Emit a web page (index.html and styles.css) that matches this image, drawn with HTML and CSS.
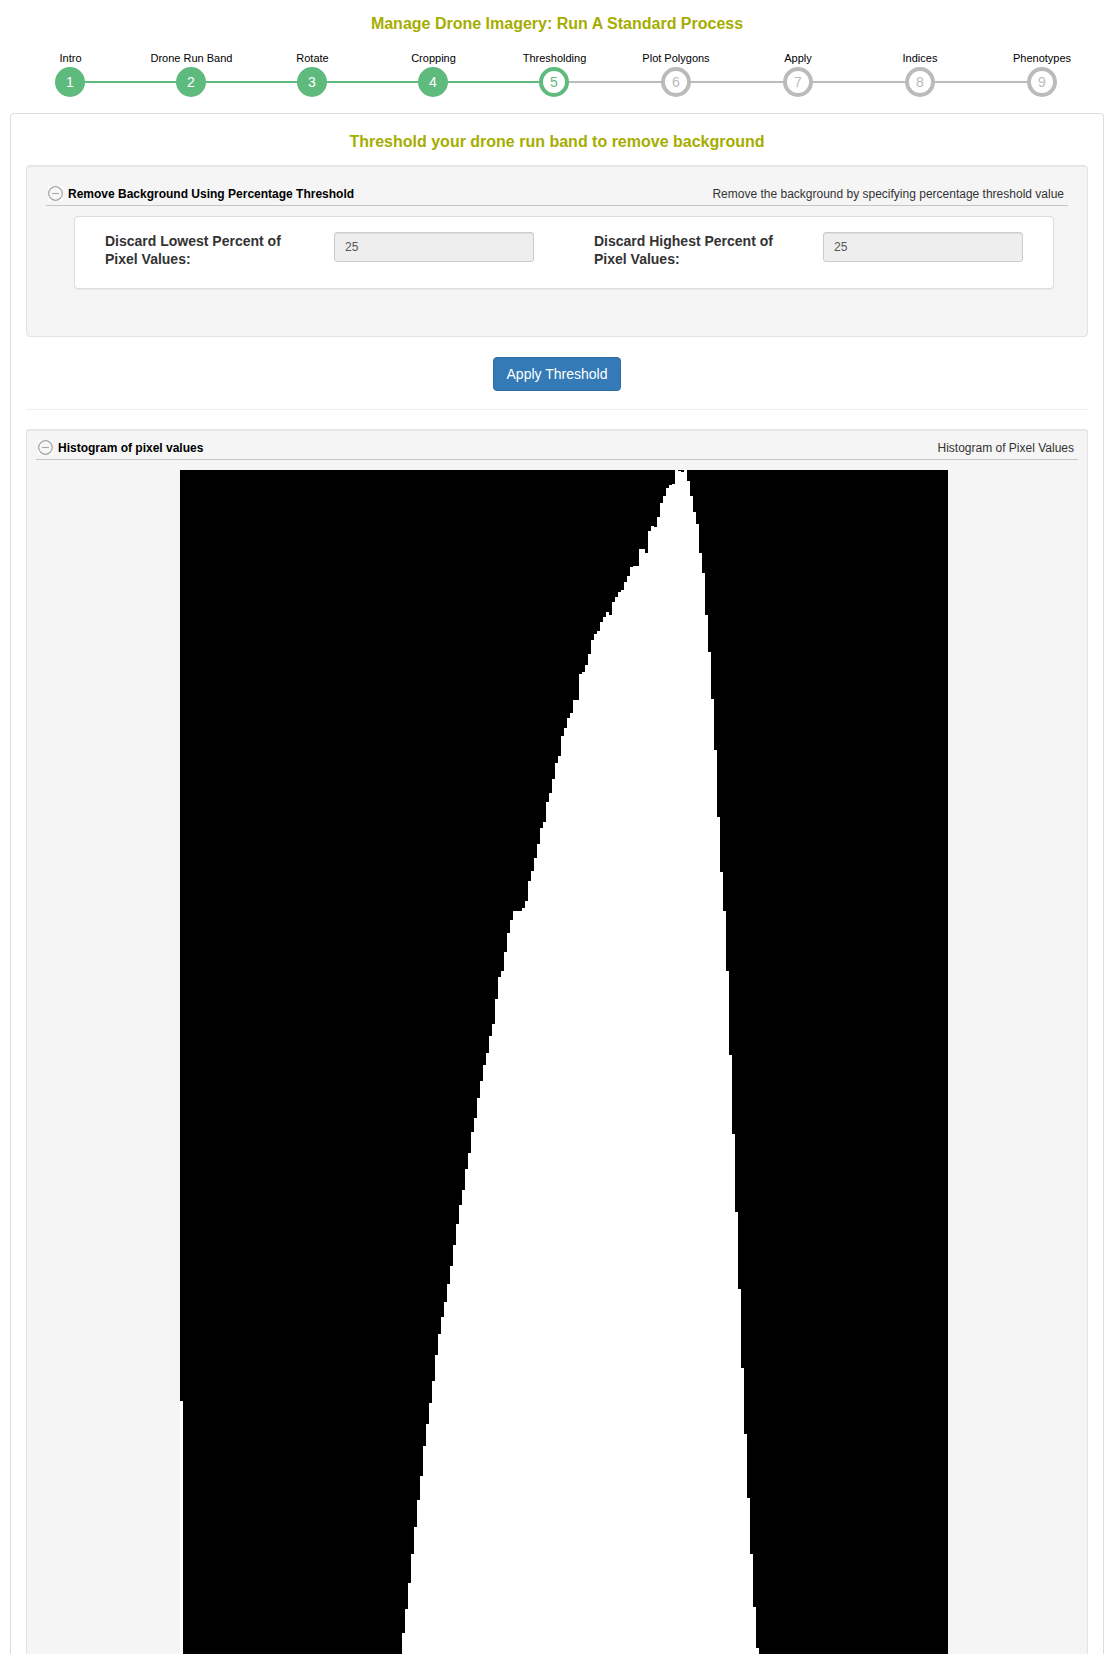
FILE: index.html
```html
<!DOCTYPE html>
<html lang="en">
<head>
<meta charset="utf-8">
<title>Manage Drone Imagery</title>
<link rel="stylesheet" href="styles.css">
</head>
<body>
<main class="page">
  <h1 class="title">Manage Drone Imagery: Run A Standard Process</h1>
  <ol class="steps">
    <li class="step done"><span class="step-name">Intro</span><span class="step-dot">1</span></li>
    <li class="step done"><span class="step-name">Drone Run Band</span><span class="step-dot">2</span></li>
    <li class="step done"><span class="step-name">Rotate</span><span class="step-dot">3</span></li>
    <li class="step done"><span class="step-name">Cropping</span><span class="step-dot">4</span></li>
    <li class="step current"><span class="step-name">Thresholding</span><span class="step-dot">5</span></li>
    <li class="step"><span class="step-name">Plot Polygons</span><span class="step-dot">6</span></li>
    <li class="step"><span class="step-name">Apply</span><span class="step-dot">7</span></li>
    <li class="step"><span class="step-name">Indices</span><span class="step-dot">8</span></li>
    <li class="step"><span class="step-name">Phenotypes</span><span class="step-dot">9</span></li>
  </ol>
  <section class="workflow">
    <h2 class="title">Threshold your drone run band to remove background</h2>
    <div class="well">
      <div class="section-head">
        <svg class="toggle" viewBox="0 0 15 15"><rect width="15" height="15" fill="#fff"/><circle cx="7.5" cy="7.5" r="6.8" fill="#f8f8f8" stroke="#a8a8a8" stroke-width="1.3"/><path d="M4 7.5h7" stroke="#a8a8a8" stroke-width="1.1"/></svg>
        <span class="section-name">Remove Background Using Percentage Threshold</span>
        <span class="section-note">Remove the background by specifying percentage threshold value</span>
      </div>
      <div class="fields">
        <label class="field-name" for="low">Discard Lowest Percent of Pixel Values:</label>
        <input class="field" id="low" value="25" disabled>
        <label class="field-name" for="high">Discard Highest Percent of Pixel Values:</label>
        <input class="field" id="high" value="25" disabled>
      </div>
    </div>
    <button class="apply">Apply Threshold</button>
    <hr class="rule">
    <div class="well well-small">
      <div class="section-head">
        <svg class="toggle" viewBox="0 0 15 15"><rect width="15" height="15" fill="#fff"/><circle cx="7.5" cy="7.5" r="6.8" fill="#f8f8f8" stroke="#a8a8a8" stroke-width="1.3"/><path d="M4 7.5h7" stroke="#a8a8a8" stroke-width="1.1"/></svg>
        <span class="section-name">Histogram of pixel values</span>
        <span class="section-note">Histogram of Pixel Values</span>
      </div>
      <svg class="histogram" viewBox="0 0 768 1184" shape-rendering="crispEdges">
        <rect width="768" height="1184" fill="#000"/>
        <path fill="#fff" d="M0 1184V931h3V1184z"/>
        <path fill="#fff" d="M222 1184V1163h3V1139h3V1113h3V1084h3V1057h3V1030h3V1006h3V976h3V954h3V933h3V911h3V885h3V864h3V847h3V832h3V814h3V796h3V775h3V754h3V735h3V720h3V699h3V683h3V662h3V648h3V628h3V611h3V595h3V583h3V566h3V554h3V529h3V507h3V501h3V482h3V463h3V450h3V441h9V438h3V431h3V411h3V401h3V388h3V374h3V358h3V352h3V332h3V323h3V309h3V293h3V286h3V266h3V258h3V248h3V243h3V230h6V204h3V202h3V195h3V184h3V170h3V164h3V161h3V152h3V147h3V142h3V145h3V132h3V127h3V122h3V120h3V112h3V106h3V97h3V96h6V79h6V83h3V61h3V56h3V57h3V47h3V33h3V26h3V18h3V15h3V14h3V0h3V1h3V2h3V0h3V11h3V26h3V42h3V54h3V83h3V103h3V145h3V182h3V229h3V280h3V347h3V402h3V441h3V501h3V585h3V664h3V742h3V819h3V898h3V964h3V1028h3V1084h3V1137h3V1178h3V1184z"/>
      </svg>
    </div>
  </section>
</main>
</body>
</html>
```

FILE: styles.css
```css
* { box-sizing: border-box; }
body {
  margin: 0;
  height: 1654px;
  overflow: hidden;
  background: #fff;
  color: #333;
  font-family: "Liberation Sans", Arial, sans-serif;
  font-size: 14px;
}
.page { width: 1094px; margin-left: 10px; padding-top: 15px; }
.title {
  margin: 0;
  text-align: center;
  color: #a5ad00;
  font-size: 16px;
  font-weight: bold;
  line-height: 18px;
}
.steps {
  display: grid;
  grid-template-columns: repeat(5, 121px) repeat(4, 122px);
  margin: 17px 0 16px;
  padding: 0;
  list-style: none;
}
.step {
  display: flex;
  flex-direction: column;
  text-align: center;
  color: #bbb;
  background: linear-gradient(#bbb, #bbb) 0 31px / 100% 2px no-repeat;
}
.step-name { color: #000; font-size: 11px; line-height: 16px; height: 17px; }
.step-dot {
  width: 30px;
  margin-left: 46px;
  line-height: 22px;
  border: 4px solid #bbb;
  border-radius: 50%;
  background: #fff;
}
.step.done, .step.current { color: #5fba7d; background-image: linear-gradient(#5fba7d, #5fba7d); }
.step.done .step-dot, .step.current .step-dot { margin-left: 45px; border-color: #5fba7d; }
.step.done .step-dot { background: #5fba7d; color: #fff; }
.step.current { background-image: linear-gradient(90deg, #5fba7d 50%, #bbb 50%); }
.step:first-child { background-position: 61px 31px; }
.step:last-child { background-size: 50% 2px; }
.workflow {
  border: 1px solid #ddd;
  border-bottom: 0;
  border-radius: 4px 4px 0 0;
  padding: 19px 15px 0;
}
.well {
  height: 172px;
  margin-top: 14px;
  padding: 19px;
  background: #f5f5f5;
  border: 1px solid #e3e3e3;
  border-radius: 4px;
  box-shadow: inset 0 1px 1px rgba(0, 0, 0, .05);
}
.well-small {
  height: 1225px;
  margin-top: 0;
  padding: 9px;
  border-bottom: 0;
  border-radius: 3px 3px 0 0;
}
.section-head {
  display: flex;
  align-items: flex-start;
  height: 21px;
  padding: 1px 4px 0 2px;
  border-bottom: 1px solid #c6c6c6;
  font-size: 12px;
  line-height: 16px;
}
.toggle { width: 15px; height: 15px; }
.section-name { margin-left: 5px; color: #000; font-weight: bold; }
.section-note { margin-left: auto; }
.fields {
  display: grid;
  grid-template-columns: 229px 200px 60px 229px 200px;
  align-items: start;
  width: 980px;
  height: 73px;
  margin: 10px 0 0 28px;
  padding: 15px 30px;
  background: #fff;
  border: 1px solid #ddd;
  border-radius: 4px;
  box-shadow: 0 1px 1px rgba(0, 0, 0, .05);
}
.field-name { width: 190px; line-height: 18px; font-weight: bold; }
.field-name:nth-of-type(2) { grid-column: 4; }
.field {
  width: 200px;
  height: 30px;
  padding: 5px 10px;
  border: 1px solid #ccc;
  border-radius: 3px;
  background: #eee;
  color: #555;
  font: 12px "Liberation Sans", Arial, sans-serif;
  box-shadow: inset 0 1px 1px rgba(0, 0, 0, .075);
}
.apply {
  display: block;
  height: 34px;
  margin: 20px auto 0;
  padding: 0 13px;
  border: 1px solid #2e6da4;
  border-radius: 4px;
  background: #337ab7;
  color: #fff;
  font: 14px "Liberation Sans", Arial, sans-serif;
}
.rule { margin: 18px 0 19px; border: 0; border-top: 1px solid #eee; }
.histogram { display: block; width: 768px; height: 1184px; margin: 10px 0 0 144px; }
```
